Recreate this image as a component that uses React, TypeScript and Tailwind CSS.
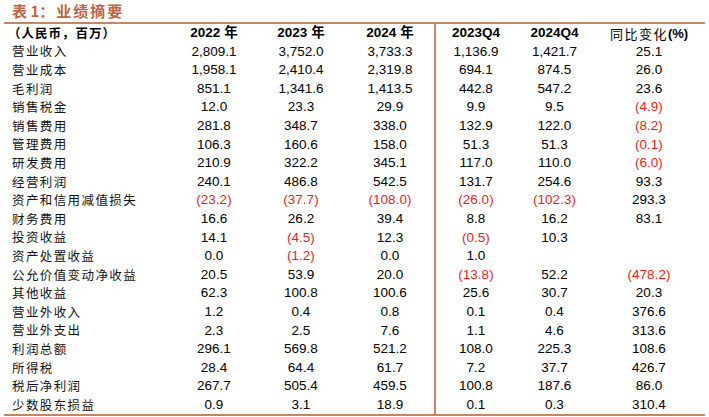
import React from "react";

type Cell = string;
const rows: [string, Cell, Cell, Cell, Cell, Cell, Cell][] = [
  ["营业收入", "2,809.1", "3,752.0", "3,733.3", "1,136.9", "1,421.7", "25.1"],
  ["营业成本", "1,958.1", "2,410.4", "2,319.8", "694.1", "874.5", "26.0"],
  ["毛利润", "851.1", "1,341.6", "1,413.5", "442.8", "547.2", "23.6"],
  ["销售税金", "12.0", "23.3", "29.9", "9.9", "9.5", "(4.9)"],
  ["销售费用", "281.8", "348.7", "338.0", "132.9", "122.0", "(8.2)"],
  ["管理费用", "106.3", "160.6", "158.0", "51.3", "51.3", "(0.1)"],
  ["研发费用", "210.9", "322.2", "345.1", "117.0", "110.0", "(6.0)"],
  ["经营利润", "240.1", "486.8", "542.5", "131.7", "254.6", "93.3"],
  ["资产和信用减值损失", "(23.2)", "(37.7)", "(108.0)", "(26.0)", "(102.3)", "293.3"],
  ["财务费用", "16.6", "26.2", "39.4", "8.8", "16.2", "83.1"],
  ["投资收益", "14.1", "(4.5)", "12.3", "(0.5)", "10.3", ""],
  ["资产处置收益", "0.0", "(1.2)", "0.0", "1.0", "", ""],
  ["公允价值变动净收益", "20.5", "53.9", "20.0", "(13.8)", "52.2", "(478.2)"],
  ["其他收益", "62.3", "100.8", "100.6", "25.6", "30.7", "20.3"],
  ["营业外收入", "1.2", "0.4", "0.8", "0.1", "0.4", "376.6"],
  ["营业外支出", "2.3", "2.5", "7.6", "1.1", "4.6", "313.6"],
  ["利润总额", "296.1", "569.8", "521.2", "108.0", "225.3", "108.6"],
  ["所得税", "28.4", "64.4", "61.7", "7.2", "37.7", "426.7"],
  ["税后净利润", "267.7", "505.4", "459.5", "100.8", "187.6", "86.0"],
  ["少数股东损益", "0.9", "3.1", "18.9", "0.1", "0.3", "310.4"],
];

const cjk = "font-['Noto_Sans_CJK_SC',sans-serif]";
const num = "font-['Liberation_Sans','Noto_Sans_CJK_SC',sans-serif]";

function NumCell({ v, divider }: { v: string; divider?: boolean }) {
  const neg = v.startsWith("(");
  return (
    <div
      className={`flex items-center justify-center h-[18.6px] text-[13.5px] ${num} ${
        neg ? "text-[#ee1c1c]" : "text-black"
      } ${divider ? "border-l-2 border-[#c48566]" : ""}`}
    >
      {v}
    </div>
  );
}

export default function App() {
  return (
    <div className="w-[709px] h-[417px] bg-white overflow-hidden relative">
      <div className="h-[22px] flex items-center pl-[12px]">
        <span className={`text-[15px] font-bold text-[#bd6441] ${cjk}`}>
          表 1：<span className="ml-[2px] tracking-[2px]">业绩摘要</span>
        </span>
      </div>
      <div className="ml-[4px] w-[701px] border-t-2 border-b-2 border-[#c48566] grid grid-cols-[168px_84px_90px_88px_82px_77px_112px]">
        <div className={`h-[18.5px] flex items-center text-[12.5px] font-bold text-black ${cjk} pl-[4px] tracking-[1px]`}>
          （人民币，百万）
        </div>
        {["2022 年", "2023 年", "2024 年"].map((h) => (
          <div key={h} className={`h-[18.5px] flex items-center justify-center text-[13.5px] font-bold text-black ${num}`}>
            {h}
          </div>
        ))}
        <div className={`h-[18.5px] flex items-center justify-center text-[13.5px] font-bold text-black ${num} border-l-2 border-[#c48566]`}>
          2023Q4
        </div>
        <div className={`h-[18.5px] flex items-center justify-center text-[13.5px] font-bold text-black ${num}`}>
          2024Q4
        </div>
        <div className={`h-[18.5px] flex items-center justify-center text-[13px] text-black`}>
          <span className={`${cjk} tracking-[1.5px]`}>同比变化</span>
          <span className={`${num} font-bold`}>(%)</span>
        </div>
        {rows.map((r) => (
          <React.Fragment key={r[0]}>
            <div className={`h-[18.6px] flex items-center text-[12.5px] text-[#111] ${cjk} pl-[8px] tracking-[1.4px]`}>
              {r[0]}
            </div>
            <NumCell v={r[1]} />
            <NumCell v={r[2]} />
            <NumCell v={r[3]} />
            <NumCell v={r[4]} divider />
            <NumCell v={r[5]} />
            <NumCell v={r[6]} />
          </React.Fragment>
        ))}
      </div>
    </div>
  );
}
